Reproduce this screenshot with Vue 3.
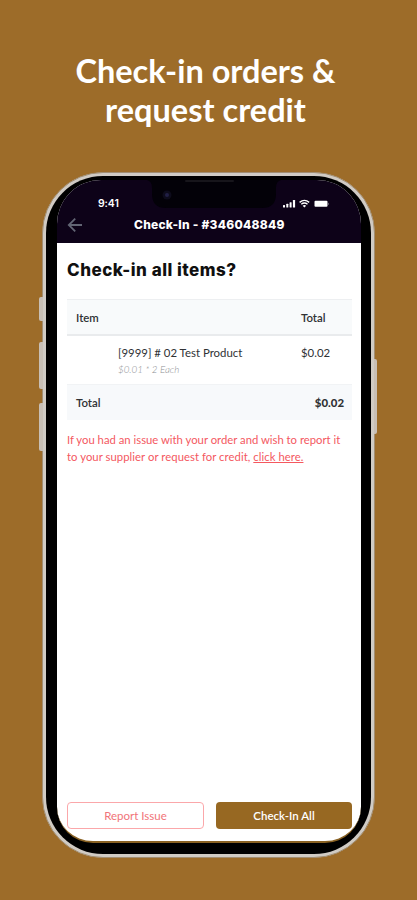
<script setup>
const item = { name: '[9999] # 02 Test Product', detail: '$0.01 * 2 Each', total: '$0.02' }
</script>

<template>
  <main class="promo">
    <h1 class="headline">Check-in orders &amp;<br />request credit</h1>
    <div class="phone">
      <i class="key mute"></i><i class="key up"></i><i class="key down"></i><i class="key power"></i>
      <div class="bezel">
        <div class="screen">
          <header class="top">
            <svg class="notch" width="134" height="28" viewBox="0 0 134 28">
              <path d="M0 0H134Q129 1 129 8V14Q129 28 115 28H19Q5 28 5 14V8Q5 1 0 0Z" fill="#030108" />
              <rect x="38" y="0" width="49" height="2" rx="1" fill="#17151b" />
              <circle cx="20" cy="15" r="4.5" fill="#0d0b1b" />
              <circle cx="20" cy="15" r="2" fill="#211f45" />
            </svg>
            <div class="status">
              <span class="time">9:41</span>
              <svg width="47" height="10" viewBox="0 0 47 10" fill="#fff">
                <rect x="0" y="6" width="2" height="2.6" rx=".5" />
                <rect x="3.3" y="4.8" width="2" height="3.8" rx=".5" />
                <rect x="6.6" y="3.2" width="2" height="5.4" rx=".5" />
                <rect x="9.9" y="1" width="2.2" height="7.6" rx=".5" />
                <g fill="none" stroke="#fff" stroke-width="1.4">
                  <path d="M16.6 3.4Q21.4-.6 26.2 3.4" />
                  <path d="M18.3 5.3Q21.4 2.8 24.5 5.3" />
                </g>
                <path d="M19.7 6.7Q21.4 5.4 23.1 6.7L21.4 8.6Z" />
                <rect x="31.5" y="1.8" width="13" height="6" rx="1" />
                <path d="M45.1 3.5Q46.2 4.9 45.1 6.3Z" />
              </svg>
            </div>
            <div class="nav">
              <svg class="back" width="16" height="16" viewBox="0 0 16 16" fill="none" stroke="#626574" stroke-width="1.8">
                <path d="M15 8H2M8.2 1.6L1.8 8L8.2 14.4" />
              </svg>
              <span class="nav-title">Check-In - #346048849</span>
            </div>
          </header>
          <section class="content">
            <h2>Check-in all items?</h2>
            <div class="table">
              <div class="row head"><span>Item</span><span class="col">Total</span></div>
              <div class="row item">
                <div class="product"><span class="name">{{ item.name }}</span><em>{{ item.detail }}</em></div>
                <span class="col">{{ item.total }}</span>
              </div>
              <div class="row foot"><span>Total</span><b>{{ item.total }}</b></div>
            </div>
            <p class="notice">
              <span>If you had an issue with your order and wish to report it</span><br />
              <span class="second">to your supplier or request for credit, <u>click here.</u></span>
            </p>
          </section>
          <footer class="actions">
            <button class="report">Report Issue</button>
            <button class="check">Check-In All</button>
          </footer>
        </div>
      </div>
    </div>
  </main>
</template>

<style>
body { margin: 0; background: #9d6c29; }
</style>

<style scoped>
* { box-sizing: border-box; }
.promo { width: 417px; height: 900px; overflow: hidden; background: #9d6c29; font-family: Lato, "Liberation Sans", sans-serif; padding-top: 51px; }
.headline { margin: 0; height: 121px; text-align: center; color: #fff; font-size: 32.5px; line-height: 39px; font-weight: 700; padding-right: 6px; white-space: nowrap; }
.phone { position: relative; width: 333px; height: 686px; margin-left: 42px; padding: 3px; border-radius: 61px; background: #d0cbc4; border: 1px solid #a28e72; }
.bezel { height: 100%; border-radius: 57px; background: #000; padding: 4px 10px 11px 11px; }
.screen { height: 100%; border-radius: 44px 44px 36px 36px; overflow: hidden; display: flex; flex-direction: column; background: #fff; border-bottom: 2px solid #8a6223; }
.key { position: absolute; width: 4px; left: -4px; background: #c8bfb5; border-radius: 2px 0 0 2px; }
.mute { top: 124px; height: 24px; }
.up { top: 169px; height: 47px; }
.down { top: 230px; height: 48px; }
.power { left: auto; right: -3px; top: 186px; height: 75px; width: 3px; border-radius: 0 2px 2px 0; }
.top { position: relative; height: 63px; flex: none; background: #0d0218; color: #fff; }
.notch { position: absolute; left: 90px; top: 0; }
.status { position: relative; display: flex; justify-content: space-between; padding: 18px 31px 0 41px; height: 33px; align-items: flex-start; }
.time { font: 600 10.5px/12px Inter, sans-serif; letter-spacing: -.1px; }
.status svg { margin-top: 1px; }
.nav { display: flex; align-items: center; height: 24px; padding-left: 10px; }
.back { flex: none; }
.nav-title { margin-left: 51px; font: 800 12px/16px Inter, sans-serif; letter-spacing: .24px; white-space: nowrap; }
.content { flex: 1; padding: 17px 9px 0 10px; }
h2 { margin: 0; font: 800 17px/20px Inter, sans-serif; letter-spacing: .5px; color: #101010; white-space: nowrap; }
.table { margin-top: 19px; font-size: 11.4px; color: #303235; }
.row { display: flex; justify-content: space-between; padding: 0 9px; }
.head { height: 37px; align-items: center; background: #f8fafb; border-top: 1px solid #edeff1; border-bottom: 2px solid #e9ebed; font-weight: 600; }
.col { width: 42px; }
.item { height: 48px; padding-top: 10px; line-height: 14px; }
.product { margin-left: 42px; }
.name { display: block; white-space: nowrap; }
em { display: block; font-size: 9.8px; font-weight: 300; color: #8d8f93; margin-top: 3px; line-height: 13px; }
.foot { height: 36px; background: #f7f9fb; align-items: center; font-weight: 600; border-top: 1px solid #f1f3f5; padding-right: 8px; }
.notice { margin: 11px 0 0; color: #f4585f; font-size: 11.3px; line-height: 17px; white-space: nowrap; }
.second { letter-spacing: .05px; }
.actions { display: flex; gap: 12px; padding: 0 9px 12px 10px; }
button { flex: none; width: 137px; height: 27px; border-radius: 4px; font: 11.5px/16px Lato, sans-serif; padding: 0; }
.report { border: 1px solid #fba7aa; background: #fff; color: #f17479; }
.check { width: 136px; border: 0; background: #976822; color: #fff; font-weight: 600; }
</style>
